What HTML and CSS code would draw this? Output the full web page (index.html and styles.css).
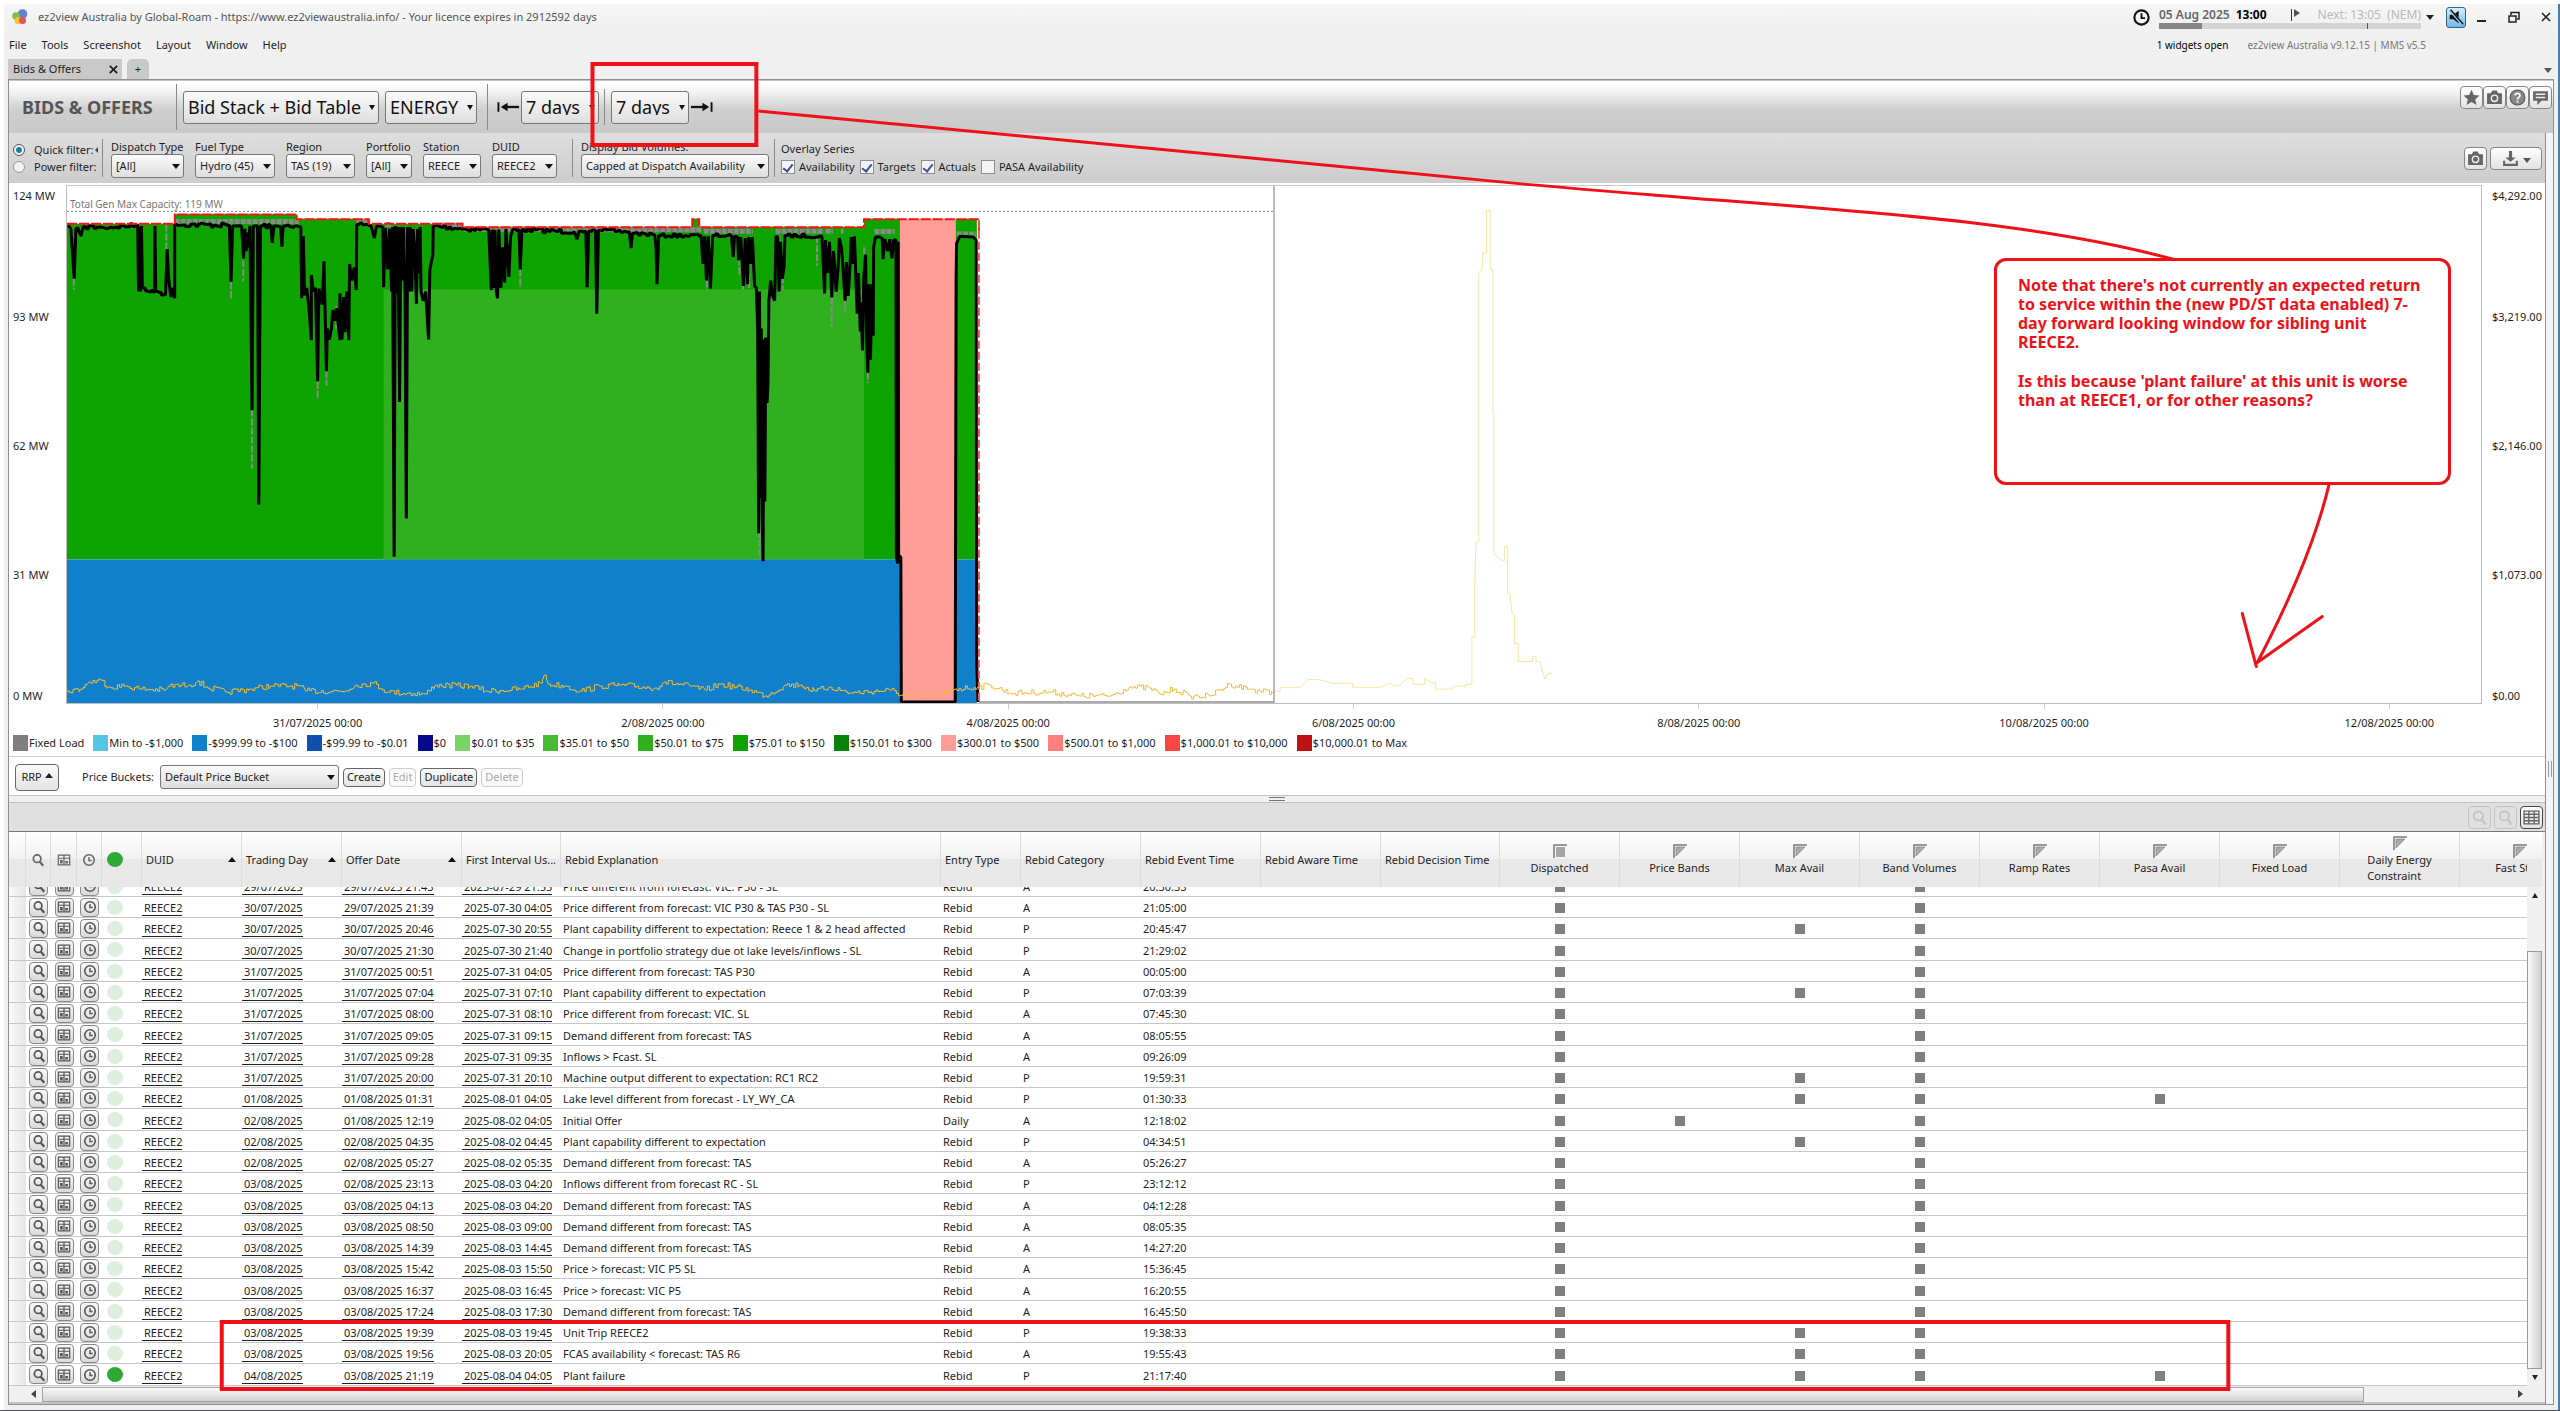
FILE: index.html
```html
<!DOCTYPE html>
<html lang="en">
<head>
  <meta charset="UTF-8">
  <meta name="viewport" content="width=device-width, initial-scale=1.0">
  <title>ez2view Australia</title>
  <link rel="stylesheet" href="styles.css">
</head>
<body>
  <!-- Shared icons -->
  <svg class="sprite" aria-hidden="true">
    <symbol id="i-search" viewBox="0 0 16 16"><circle cx="7" cy="6.500" r="4.300" fill="none" stroke="currentColor" stroke-width="2"/><path d="M10 10l4 4.500" stroke="currentColor" stroke-width="2.400"/></symbol>
    <symbol id="i-book" viewBox="0 0 16 16"><path d="M1.500 2.500h13v11h-13zM8 2.500v11M1.500 6h13" fill="none" stroke="currentColor" stroke-width="1.400"/><path d="M3.500 8h3v4h-3zM9.500 9h3v3h-3z" fill="currentColor"/></symbol>
    <symbol id="i-clock" viewBox="0 0 16 16"><circle cx="8" cy="8" r="6" fill="none" stroke="currentColor" stroke-width="1.800"/><path d="M8 4.500V8.500h3" fill="none" stroke="currentColor" stroke-width="1.600"/></symbol>
    <symbol id="i-star" viewBox="0 0 16 16"><path d="M8 .8l2.200 4.900 5.300.5-4 3.600 1.200 5.300L8 12.300l-4.700 2.800 1.200-5.300-4-3.600 5.300-.5z" fill="currentColor"/></symbol>
    <symbol id="i-camera" viewBox="0 0 16 16"><path d="M1 4h3.500L6 1.500h4L11.500 4H15v10H1z" fill="currentColor"/><circle cx="8" cy="8.800" r="3" fill="none" stroke="#eee" stroke-width="1.300"/></symbol>
    <symbol id="i-help" viewBox="0 0 16 16"><circle cx="8" cy="8" r="7" fill="#888" stroke="#555" stroke-width="1"/><path d="M5.700 6.200C5.800 3.300 10.400 3.400 10.300 6.200 10.200 7.800 8 7.900 8 9.800M8 11v1.700" fill="none" stroke="#fff" stroke-width="1.600"/></symbol>
    <symbol id="i-note" viewBox="0 0 16 16"><path d="M1 2h14v9H9l-4 4v-4H1z" fill="currentColor"/><path d="M3.500 5h9M3.500 8h9" stroke="#eee" stroke-width="1.400"/></symbol>
    <symbol id="i-save" viewBox="0 0 16 16"><path d="M6.500 1h3v6H13L8 11 3 7h3.500z" fill="currentColor"/><path d="M2 10v4h12v-4" fill="none" stroke="currentColor" stroke-width="2"/></symbol>
    <symbol id="i-grid" viewBox="0 0 16 16"><path d="M1 2h14v12H1zM1 5h14M1 8h14M1 11h14M5.500 2v12M10.500 2v12" fill="none" stroke="currentColor" stroke-width="1.300"/></symbol>
    <symbol id="i-bevel" viewBox="0 0 14 14"><path d="M1 14V1h13" fill="none" stroke="#777" stroke-width="1.500"/><path d="M3 12V3h9z" fill="#aaa" stroke="#777" stroke-width=".6"/></symbol>
    <symbol id="i-bevelbox" viewBox="0 0 14 14"><path d="M1 14V1h13" fill="none" stroke="#777" stroke-width="1.500"/><path d="M3 3h9v10H3z" fill="#a5a5a5"/></symbol>
  </svg>

  <div class="window">
    <header class="titlebar">
      <svg class="logo" viewBox="0 0 16 16"><circle cx="10.500" cy="5" r="4.800" fill="#5f86c8"/><circle cx="4" cy="7" r="3.800" fill="#7fbf3f"/><circle cx="6" cy="11.500" r="3.500" fill="#f3c433"/><circle cx="10.500" cy="11.500" r="3.500" fill="#e5574c"/></svg>
      <span class="app-name">ez2view Australia by Global-Roam - https://www.ez2viewaustralia.info/ - Your licence expires in 2912592 days</span>
      <svg class="clock"><use href="#i-clock"/></svg>
      <div class="market-time">
        <div class="times"><b>05 Aug 2025</b><strong>13:00</strong><i class="flag"></i><em>Next: 13:05&nbsp; (NEM)</em></div>
        <div class="progress"><i class="done"></i><i class="tick"></i></div>
      </div>
      <i class="caret"></i>
      <button class="mute" aria-label="Mute"><svg viewBox="0 0 20 20"><path d="M3 7.500h4L13 3v14l-6-4.500H3z" fill="#111"/><path d="M3 2l14 16" stroke="#8fd0f5" stroke-width="3"/><path d="M4 2l14 16" stroke="#111" stroke-width="1.500"/></svg></button>
      <button class="win-btn" aria-label="Minimise"><svg viewBox="0 0 12 12"><path d="M1 10h9" stroke="#222" stroke-width="2"/></svg></button>
      <button class="win-btn" aria-label="Restore"><svg viewBox="0 0 12 12"><path d="M1 5h7v6H1zM3 4V1.500h8V8H9" fill="none" stroke="#222" stroke-width="1.500"/></svg></button>
      <button class="win-btn" aria-label="Close"><svg viewBox="0 0 12 12"><path d="M2 2l8 8M10 2l-8 8" stroke="#222" stroke-width="1.600"/></svg></button>
    </header>

    <nav class="menubar">
      <a href="#">File</a><a href="#">Tools</a><a href="#">Screenshot</a><a href="#">Layout</a><a href="#">Window</a><a href="#">Help</a>
      <span class="widgets">1 widgets open</span>
      <span class="version">ez2view Australia v9.12.15 | MMS v5.5</span>
    </nav>

    <div class="tabs">
      <div class="tab">Bids &amp; Offers <button aria-label="Close tab"><svg viewBox="0 0 12 12"><path d="M2 2l8 8M10 2l-8 8" stroke="#222" stroke-width="2"/></svg></button></div>
      <button class="tab-add">+</button>
      <i class="caret tabs-more"></i>
    </div>

    <main class="workspace">
      <div class="header-bar">
        <h1>BIDS &amp; OFFERS</h1>
        <i class="sep"></i>
        <span class="combo big view"><select aria-label="View"><option>Bid Stack + Bid Table</option></select></span>
        <span class="combo big market"><select aria-label="Market"><option>ENERGY</option></select></span>
        <i class="sep"></i>
        <svg class="arrow" viewBox="0 0 24 12"><path d="M1.500 1v10" stroke="#111" stroke-width="2"/><path d="M6 6h17" stroke="#111" stroke-width="2.400"/><path d="M4 6l7-4.500v9z" fill="#111"/></svg>
        <span class="combo big days"><select aria-label="Days back"><option>7 days</option></select></span>
        <i class="sep near"></i>
        <span class="combo big days"><select aria-label="Days forward"><option>7 days</option></select></span>
        <svg class="arrow" viewBox="0 0 24 12"><path d="M22.500 1v10" stroke="#111" stroke-width="2"/><path d="M1 6h17" stroke="#111" stroke-width="2.400"/><path d="M20 6l-7-4.500v9z" fill="#111"/></svg>
        <div class="header-tools">
          <button class="icon-btn" aria-label="Favourite"><svg><use href="#i-star"/></svg></button>
          <button class="icon-btn" aria-label="Screenshot"><svg><use href="#i-camera"/></svg></button>
          <button class="icon-btn" aria-label="Help"><svg><use href="#i-help"/></svg></button>
          <button class="icon-btn" aria-label="Notes"><svg><use href="#i-note"/></svg></button>
        </div>
      </div>

      <div class="body-row">
        <div class="content">
          <div class="filters">
            <div class="filter-mode">
              <label><input type="radio" name="mode" checked>Quick filter:<i class="caret left"></i></label>
              <label><input type="radio" name="mode">Power filter:</label>
            </div>
            <i class="sep"></i>
            <label class="field w73">Dispatch Type<span class="combo"><select><option>[All]</option></select></span></label>
            <label class="field w80">Fuel Type<span class="combo"><select><option>Hydro (45)</option></select></span></label>
            <label class="field w69">Region<span class="combo"><select><option>TAS (19)</option></select></span></label>
            <label class="field w46">Portfolio<span class="combo"><select><option>[All]</option></select></span></label>
            <label class="field w58">Station<span class="combo"><select><option>REECE</option></select></span></label>
            <label class="field w64">DUID<span class="combo"><select><option>REECE2</option></select></span></label>
            <i class="sep"></i>
            <label class="field w188">Display Bid Volumes:<span class="combo"><select><option>Capped at Dispatch Availability</option></select></span></label>
            <i class="sep"></i>
            <div class="overlay-series">
              <span>Overlay Series</span>
              <div class="checks">
                <label><input type="checkbox" checked>Availability</label>
                <label><input type="checkbox" checked>Targets</label>
                <label><input type="checkbox" checked>Actuals</label>
                <label><input type="checkbox">PASA Availability</label>
              </div>
            </div>
            <div class="filter-tools">
              <button class="icon-btn" aria-label="Snapshot"><svg><use href="#i-camera"/></svg></button>
              <button class="icon-btn wide" aria-label="Export"><svg><use href="#i-save"/></svg><i class="caret"></i></button>
            </div>
          </div>

          <section class="chart">
            <div class="y-axis"><span>124 MW</span><span>93 MW</span><span>62 MW</span><span>31 MW</span><span>0 MW</span></div>
            <div class="plot">
              <span class="cap-label">Total Gen Max Capacity: 119 MW</span>
              <svg viewBox="66 185 2417 519" preserveAspectRatio="none">
                <!-- bid stack bands -->
                <path fill="#0ea400" d="M66 223H174V213H296V218H368V223H462V226H692V218H699V226H864V218H900V560H66zM955 218H977V560H955z"/>
                <path fill="#2eb01f" d="M383 289H864V560H383z"/>
                <path fill="#1080cc" d="M66 560H900V704H66zM955 560H977V704H955z"/>
                <path fill="#ff9d98" d="M900 218H956V704H900z"/>
                <!-- series -->
                <path class="line cap" d="M66 210.500H1274"/>
                <g transform="translate(0 180) scale(.4209 .3699)">
                  <path class="line target" d="M413 110H708M845 110H878M915 118H930M1030 120H1098M1100 131H1425"/>
                  <path class="line stub" d="M173 265V295M393 118V190M547 275V320M576 215V272M597 620V780M753 545V590M774 515V556M797 340V400M1235 240V290"/>
                </g>
                <g transform="translate(600 180) scale(.4464 .3699)">
                  <path class="line target" d="M0 132H228M232 136H342M393 136H500M505 136H522M540 136H545M615 137H660M800 144H843"/>
                  <path class="line stub" d="M239 270V297M312 210V260M320 285V295M334 225V290M357 950V1020M401 150V200M409 235V295M486 150V230M510 170V250M519 315V395M549 325V355M592 180V200M600 520V548"/>
                </g>
                <g transform="translate(0 180) scale(.4209 .3699)"><path id="actual-a" class="line actual"/></g>
                <g transform="translate(600 180) scale(.4464 .3699)"><path id="actual-b" class="line actual"/></g>
                <path class="line after" d="M979 703H1274"/>
                <path class="line avail" d="M66 223H174V213.500H296V218.500H368V223H462V226.500H692V218.500H699V226.500H864V218.500H979V230"/>
                <path class="line avail-end" d="M979 219V703"/>
                <path id="rrp" class="line rrp"/>
                <g transform="translate(1260 180) scale(.4592 .3699)">
                  <path class="line rrp-next" d="M31 1385H45V1374H90L105 1353H130L160 1363H203V1374H265L285 1362 292 1370H305L322 1348 335 1352V1366H360V1350L375 1362H384V1379H422V1371H450V1366H463V1238H469V1100L472 980H478V250L486 235V195H495V80H503V240H509V630H511V1012L528 1030H534V992H541V1120H546L551 1177H556V1255H564V1304H595V1290H603V1304H611L622 1352 628 1336H638"/>
                </g>
                <path class="line now" d="M1274.500 185V704"/>
              </svg>
            </div>
            <div class="y-axis right"><span>$4,292.00</span><span>$3,219.00</span><span>$2,146.00</span><span>$1,073.00</span><span>$0.00</span></div>
            <div class="x-axis"><span>31/07/2025 00:00</span><span>2/08/2025 00:00</span><span>4/08/2025 00:00</span><span>6/08/2025 00:00</span><span>8/08/2025 00:00</span><span>10/08/2025 00:00</span><span>12/08/2025 00:00</span></div>
          </section>

          <ul class="legend" id="legend"></ul>

          <div class="bucket-bar">
            <button class="btn rrp-btn">RRP <i class="caret up"></i></button>
            <label for="bucket">Price Buckets:</label>
            <span class="combo bucket"><select id="bucket"><option>Default Price Bucket</option></select></span>
            <button class="btn">Create</button>
            <button class="btn" disabled>Edit</button>
            <button class="btn">Duplicate</button>
            <button class="btn" disabled>Delete</button>
          </div>

          <div class="splitter"><i></i></div>

          <div class="table-tools">
            <button class="icon-btn" disabled aria-label="Find"><svg><use href="#i-search"/></svg></button>
            <button class="icon-btn" disabled aria-label="Find next"><svg><use href="#i-search"/></svg></button>
            <button class="icon-btn active" aria-label="Grid"><svg><use href="#i-grid"/></svg></button>
          </div>

          <section class="bids">
            <div class="bids-scroll" id="scroller">
              <table>
                <colgroup>
                  <col class="c17"><col class="c25"><col class="c26"><col class="c25"><col class="c40">
                  <col class="c100"><col class="c100"><col class="c120"><col class="c99"><col class="c380"><col class="c80">
                  <col class="c120"><col class="c120"><col class="c120"><col class="c119">
                  <col class="c120"><col class="c120"><col class="c120"><col class="c120"><col class="c120"><col class="c120"><col class="c120"><col class="c120"><col class="c120">
                </colgroup>
                <thead>
                  <tr>
                    <th></th>
                    <th class="ico"><svg><use href="#i-search"/></svg></th>
                    <th class="ico"><svg><use href="#i-book"/></svg></th>
                    <th class="ico"><svg><use href="#i-clock"/></svg></th>
                    <th class="dotcell"><i class="dot on"></i></th>
                    <th class="sorted">DUID</th>
                    <th class="sorted">Trading Day</th>
                    <th class="sorted">Offer Date</th>
                    <th>First Interval Us...</th>
                    <th>Rebid Explanation</th>
                    <th>Entry Type</th>
                    <th>Rebid Category</th>
                    <th>Rebid Event Time</th>
                    <th>Rebid Aware Time</th>
                    <th>Rebid Decision Time</th>
                    <th class="flagcol"><svg><use href="#i-bevelbox"/></svg><span>Dispatched</span></th>
                    <th class="flagcol"><svg><use href="#i-bevel"/></svg><span>Price Bands</span></th>
                    <th class="flagcol"><svg><use href="#i-bevel"/></svg><span>Max Avail</span></th>
                    <th class="flagcol"><svg><use href="#i-bevel"/></svg><span>Band Volumes</span></th>
                    <th class="flagcol"><svg><use href="#i-bevel"/></svg><span>Ramp Rates</span></th>
                    <th class="flagcol"><svg><use href="#i-bevel"/></svg><span>Pasa Avail</span></th>
                    <th class="flagcol"><svg><use href="#i-bevel"/></svg><span>Fixed Load</span></th>
                    <th class="flagcol"><svg><use href="#i-bevel"/></svg><span>Daily Energy<br>Constraint</span></th>
                    <th class="flagcol"><svg><use href="#i-bevel"/></svg><span>Fast Start</span></th>
                  </tr>
                </thead>
                <tbody id="rows"></tbody>
              </table>
            </div>
            <div class="v-scroll">
              <div class="corner"></div>
              <i class="caret up"></i>
              <div class="v-track"><div class="v-thumb"></div></div>
              <i class="caret"></i>
            </div>
          </section>
          <div class="h-scroll">
            <i class="caret left"></i>
            <div class="h-track"><div class="h-thumb"></div></div>
            <i class="caret right"></i>
          </div>
        </div>
        <div class="side-grip"><i></i></div>
      </div>
    </main>
  </div>

  <!-- Mark-up drawn over the window -->
  <svg class="markup" viewBox="0 0 2560 1411">
    <path d="M592 64H756V145H592zM221 1323H2229V1390H221z" stroke-width="4"/>
    <path d="M758 111C950 131 1200 153 1490 181S2000 212 2176 260" stroke-width="3"/>
    <path d="M2330 484Q2312 560 2258 663M2243 614L2257 667M2323 617L2258 663" stroke-width="3" stroke-linecap="round"/>
  </svg>
  <aside class="callout">
    <p>Note that there's not currently an expected return<br>to service within the (new PD/ST data enabled) 7-<br>day forward looking window for sibling unit<br>REECE2.</p>
    <p>Is this because 'plant failure' at this unit is worse<br>than at REECE1, or for other reasons?</p>
  </aside>

  <script src="app.js"></script>
</body>
</html>
```

FILE: styles.css
```css
/* Reset styles */
* {
  margin: 0;
  padding: 0;
  box-sizing: border-box;
}

body {
  font-family: "Noto Sans", "Open Sans", sans-serif;
  font-size: 11px;
  line-height: 16px;
  color: #1e1e1e;
  background: #fff;
  height: 100vh;
  overflow: hidden;
  display: flex;
  position: relative;
  padding: 4px 0 0 4px;
  border-bottom: 1px solid #50525c;
}

button, select, input {
  font: inherit;
  color: inherit;
}

i, em {
  font-style: normal;
}

.sprite {
  position: absolute;
  width: 0;
  height: 0;
}

.window {
  flex: 1;
  min-width: 0;
  display: flex;
  flex-direction: column;
  background: #f0f0f0;
  border-right: 2px solid #4f7fa0;
}

/* Small triangles */
.caret {
  display: inline-block;
  border: 4px solid transparent;
  border-top: 5px solid #222;
  border-bottom: 0;
}

.caret.up {
  border-top: 0;
  border-bottom: 5px solid #222;
}

.caret.left {
  border: 4px solid transparent;
  border-right: 5px solid #444;
  border-left: 0;
}

.caret.right {
  border: 4px solid transparent;
  border-left: 5px solid #444;
  border-right: 0;
}

/* Title bar */
.titlebar {
  height: 26px;
  display: flex;
  align-items: center;
  padding: 0 4px 0 8px;
  background: linear-gradient(#f6f6f6, #f0f0f0);
}

.logo {
  width: 16px;
  height: 16px;
  margin-right: 10px;
}

.app-name {
  flex: 1;
  color: #555;
}

.clock {
  width: 19px;
  height: 19px;
  margin-right: 8px;
  color: #111;
}

.market-time {
  width: 262px;
  margin-right: 5px;
}

.times {
  display: flex;
  line-height: 17px;
  font-size: 12px;
}

.times b {
  color: #666;
  font-weight: 600;
}

.times strong {
  margin-left: 6px;
  color: #000;
}

.times em {
  margin-left: auto;
  color: #b8b8b8;
}

.flag {
  height: 12px;
  margin: 3px 0 0 24px;
  border-left: 1px solid #333;
}

.flag::after {
  content: "";
  display: block;
  margin-left: 2px;
  border: 4px solid transparent;
  border-left: 6px solid #555;
  border-right: 0;
}

.progress {
  height: 6px;
  background: #d3d3d3;
  display: flex;
  align-items: stretch;
}

.done {
  width: 43px;
  background: #858585;
}

.tick {
  width: 166px;
  border-right: 1px solid #555;
}

.mute {
  width: 20px;
  height: 21px;
  margin: 0 6px 0 12px;
  border: 1px solid #35647f;
  border-radius: 3px;
  background: linear-gradient(#d5eefb, #6fb9e6);
}

.mute svg {
  display: block;
}

.win-btn {
  width: 12px;
  height: 20px;
  margin: 0 2px 0 4px;
  border: 0;
  background: none;
}

.win-btn + .win-btn {
  margin-left: 18px;
}

.win-btn svg {
  display: block;
  width: 12px;
  height: 12px;
}

/* Menu */
.menubar {
  height: 29px;
  display: flex;
  align-items: center;
  gap: 15px;
  padding: 0 132px 0 5px;
}

.menubar a {
  color: inherit;
  text-decoration: none;
}

.widgets {
  margin-left: auto;
  font-size: 10px;
  color: #000;
}

.version {
  margin-left: 4px;
  font-size: 10px;
  color: #777;
}

/* Tabs */
.tabs {
  height: 20px;
  display: flex;
  align-items: flex-end;
  padding: 0 4px;
}

.tab {
  width: 114px;
  height: 20px;
  padding: 0 3px 0 5px;
  display: flex;
  justify-content: space-between;
  align-items: center;
  background: #c9c9c9;
}

.tab button, .tab-add {
  border: 0;
  background: none;
}

.tab button svg {
  display: block;
  width: 11px;
  height: 11px;
}

.tab-add {
  width: 22px;
  height: 20px;
  margin-left: 5px;
  border-radius: 5px 5px 0 0;
  background: #c9c9c9;
}

.tabs-more {
  margin: 0 2px 6px auto;
  border-top-color: #555;
}

/* Workspace */
.workspace {
  flex: 1;
  min-height: 0;
  margin: 0 4px 5px 4px;
  border: 1px solid #8f8f8f;
  display: flex;
  flex-direction: column;
}

.header-bar {
  height: 53px;
  display: flex;
  align-items: center;
  padding-left: 13px;
  border-top: 1px solid #c5c5c5;
  background: linear-gradient(#fff 0%, #f4f4f4 20%, #cfcfcf 55%, #c9c9c9 100%);
}

.header-bar h1 {
  width: 154px;
  font-size: 18px;
  font-weight: 700;
  color: #555;
}

.sep {
  width: 1px;
  height: 46px;
  margin-right: 6px;
  background: #8a8a8a;
}

.sep.near {
  margin: 0 6px 0 5px;
  height: 36px;
}

.header-bar .market + .sep {
  margin: 0 8px 0 10px;
}

/* Drop-downs */
.combo {
  position: relative;
  display: inline-block;
}

.combo select {
  width: 100%;
  height: 24px;
  padding: 0 4px;
  appearance: none;
  border: 1px solid #777;
  border-radius: 3px;
  background: linear-gradient(#fbfbfb, #ececec 50%, #dedede);
}

.combo::after {
  content: "";
  position: absolute;
  right: 4px;
  top: 10px;
  border: 4px solid transparent;
  border-top: 5px solid #111;
  border-bottom: 0;
  pointer-events: none;
}

.combo.big select {
  height: 33px;
  padding: 0 4px;
  font-size: 18px;
  color: #111;
}

.combo.big::after {
  top: 14px;
  border-width: 5px 3px 0;
}

.view {
  width: 196px;
  margin-right: 6px;
}

.market {
  width: 92px;
}

.days {
  width: 78px;
}

.arrow {
  width: 23px;
  height: 12px;
  margin: 0 1px;
}

.header-tools {
  margin: 0 1px 20px auto;
  display: flex;
}

.icon-btn {
  width: 23px;
  height: 23px;
  padding: 0;
  display: flex;
  align-items: center;
  justify-content: center;
  border: 1px solid #858585;
  border-radius: 4px;
  color: #666;
  background: linear-gradient(#fff, #e2e2e2);
}

.icon-btn svg {
  flex: none;
  width: 17px;
  height: 17px;
}

.icon-btn.wide {
  width: 52px;
  gap: 4px;
}

.icon-btn.wide .caret {
  margin-top: 5px;
  border-top-color: #555;
}

.icon-btn:disabled {
  color: #c6c6c6;
  border-color: #c3c3c3;
  background: none;
}

.icon-btn.active {
  border-color: #444;
}

.body-row {
  flex: 1;
  min-height: 0;
  display: flex;
}

.content {
  flex: 1;
  min-width: 0;
  display: flex;
  flex-direction: column;
}

.side-grip {
  width: 8px;
  border-left: 1px solid #8f8f8f;
  background: #f4f4f4;
  display: flex;
  align-items: center;
  justify-content: center;
}

.side-grip i {
  width: 4px;
  height: 16px;
  border: solid #999;
  border-width: 0 1px;
}

/* Filters */
.filters {
  height: 50px;
  display: flex;
  align-items: center;
  padding: 0 3px 0 4px;
  background: linear-gradient(#dedede, #cdcdcd);
}

.filters .sep {
  height: 38px;
  margin: 0 8px 0 4px;
}

.filter-mode {
  width: 85px;
  display: flex;
  flex-direction: column;
  gap: 1px;
}

.filter-mode .caret {
  margin-left: auto;
  border-width: 3px 3px 3px 0;
}

.filter-mode label, .checks label {
  display: flex;
  align-items: center;
  white-space: nowrap;
}

input[type="radio"] {
  width: 12px;
  height: 12px;
  margin-right: 9px;
  appearance: none;
  border: 1px solid #999;
  border-radius: 50%;
  background: #f2f2f2;
}

input[type="radio"]:checked {
  border-color: #555;
  background: radial-gradient(#1d7fa8 35%, #f2f2f2 50%);
}

input[type="checkbox"] {
  width: 14px;
  height: 14px;
  margin-right: 4px;
  display: grid;
  place-items: center;
  appearance: none;
  border: 1px solid #8e8f8f;
  background: #f4f4f4;
}

input[type="checkbox"]:checked::after {
  content: "";
  width: 4px;
  height: 8px;
  border: solid #3b4f9c;
  border-width: 0 2px 2px 0;
  rotate: 38deg;
}

.field {
  display: flex;
  flex-direction: column;
  margin-right: 11px;
  line-height: 15px;
  white-space: nowrap;
}

.w73 { width: 73px; }
.w80 { width: 80px; }
.w69 { width: 69px; }
.w46 { width: 46px; }
.w58 { width: 58px; }
.w64 { width: 65px; }
.w188 { width: 188px; margin-right: 1px; }

.filters .w188 + .sep {
  margin-right: 6px;
}

.overlay-series {
  line-height: 18px;
}

.checks {
  display: flex;
  gap: 5px;
}

.filter-tools {
  display: flex;
  gap: 3px;
  margin-left: auto;
}

/* Chart */
.chart {
  flex: 1;
  min-height: 0;
  display: grid;
  grid-template-columns: 57px 1fr 63px;
  grid-template-rows: 1fr 30px;
  padding-top: 2px;
  background: #fff;
  overflow: hidden;
}

.y-axis {
  display: grid;
  grid-template-rows: 1fr 2fr 2fr 2fr 1fr;
  align-items: center;
  padding: 3px 0 0 4px;
}

.y-axis span:first-child {
  align-self: start;
}

.y-axis span:last-child {
  align-self: end;
}

.y-axis.right {
  padding-left: 10px;
}

.plot {
  position: relative;
  min-height: 0;
  border: 1px solid #bdbdbd;
  border-top-color: #c9c9c9;
}

.plot svg {
  display: block;
  width: 100%;
  height: 100%;
}

.cap-label {
  position: absolute;
  left: 3px;
  top: 10px;
  font-size: 10px;
  color: #777;
}

.line {
  fill: none;
  stroke-linejoin: miter;
  vector-effect: non-scaling-stroke;
}

.cap { stroke: #888; stroke-dasharray: 2 2; }
.target { stroke: #8a8a8a; stroke-width: 5px; stroke-dasharray: 5 1; }
.stub { stroke: #8a8a8a; stroke-width: 2px; stroke-dasharray: 7 2; }
.actual { stroke: #000; stroke-width: 3px; stroke-linejoin: bevel; }
.after { stroke: #555; stroke-width: 1px; }
.avail { stroke: #f11; stroke-width: 2px; stroke-dasharray: 10 2; }
.avail-end { stroke: #f0525a; stroke-width: 2px; stroke-dasharray: 8 3; }
.rrp { stroke: #f5bd2f; stroke-width: 1px; }
.rrp-next { stroke: #fde4a4; stroke-width: 1px; }
.now { stroke: #777; }

.x-axis {
  grid-column: 2;
  display: flex;
  margin: 0 -80px 0 79px;
}

.x-axis span {
  flex: 1;
  text-align: center;
  padding-top: 11px;
  background: linear-gradient(#ccc, #ccc) top center / 1px 5px no-repeat;
}

.legend {
  height: 23px;
  display: flex;
  gap: 9px;
  padding: 1px 4px 0;
  list-style: none;
  background: #fff;
  border-bottom: 1px solid #ccc;
  white-space: nowrap;
}

.legend li {
  display: flex;
  gap: 1px;
}

.legend i {
  width: 15px;
  height: 16px;
}

/* Price bucket bar */
.bucket-bar {
  height: 38px;
  display: flex;
  align-items: center;
  padding: 2px 0 0 6px;
  background: #fff;
}

.btn {
  height: 19px;
  margin-left: 4px;
  padding: 0 3px;
  border: 1px solid #666;
  border-radius: 4px;
  background: linear-gradient(#fafafa, #e3e3e3);
}

.btn:disabled {
  color: #aaa;
  border-color: #ccc;
  background: #fafafa;
}

.rrp-btn {
  width: 44px;
  height: 27px;
  margin: 0 23px 0 0;
}

.rrp-btn .caret {
  margin-bottom: 3px;
}

.bucket {
  width: 179px;
  margin-left: 6px;
}

.splitter {
  height: 8px;
  display: flex;
  justify-content: center;
  align-items: center;
  border: solid #c2c2c2;
  border-width: 1px 0;
  background: #f0f0f0;
}

.splitter i {
  width: 16px;
  height: 4px;
  border: solid #777;
  border-width: 1px 0;
}

.table-tools {
  height: 29px;
  display: flex;
  justify-content: flex-end;
  align-items: center;
  gap: 3px;
  padding-right: 2px;
  border-bottom: 1px solid #777;
  background: #e0e0e0;
}

/* Bid table */
.bids {
  height: 554px;
  display: flex;
  background: #fff;
}

.bids-scroll {
  flex: 1;
  min-width: 0;
  overflow: hidden;
}

table {
  width: 2571px;
  table-layout: fixed;
  border-collapse: separate;
  border-spacing: 0;
}

.c17 { width: 17px; }
.c25 { width: 25px; }
.c26 { width: 26px; }
.c40 { width: 40px; }
.c80 { width: 80px; }
.c99 { width: 99px; }
.c100 { width: 100px; }
.c119 { width: 119px; }
.c120 { width: 120px; }
.c380 { width: 380px; }

th {
  position: sticky;
  top: 0;
  z-index: 1;
  height: 55px;
  padding: 0 4px;
  border-right: 1px solid #dcdcdc;
  text-align: left;
  font-weight: 400;
  white-space: nowrap;
  background: linear-gradient(#fff, #f2f2f2 48%, #e8e8e8 50%, #e8e8e8);
}

.ico, .dotcell {
  padding: 0;
  text-align: center;
}

th.ico svg {
  width: 14px;
  height: 14px;
  display: block;
  margin: 0 auto;
  color: #666;
}

.dot {
  display: block;
  width: 16px;
  height: 15px;
  margin: 0 auto 0 5px;
  border-radius: 50%;
  background: #dceedd;
}

.dot.on {
  background: #2fa836;
}

.sorted::after {
  content: "";
  float: right;
  margin: 5px 1px 0 0;
  border: 4px solid transparent;
  border-bottom: 5px solid #111;
  border-top: 0;
}

.flagcol {
  text-align: center;
}

.flagcol svg {
  display: block;
  width: 14px;
  height: 14px;
  margin: 0 auto 2px;
}

.flagcol span {
  display: inline-block;
  text-align: left;
}

td {
  height: 21px;
  padding: 2px 2px 0;
  border-bottom: 1px solid #c6c6c6;
  line-height: 16px;
  white-space: nowrap;
  overflow: hidden;
}

tbody tr:nth-child(4n) td {
  height: 22px;
}

td:first-child {
  background: linear-gradient(90deg, #fafafa, #e6e6e6);
}

td a {
  margin-left: -2px;
  padding-left: 2px;
  color: inherit;
  text-decoration: none;
  border-bottom: 1px solid #222;
}

td.ico, td.dotcell {
  padding: 0;
}

.cell-btn {
  width: 19px;
  height: 19px;
  display: grid;
  place-items: center;
  margin: 0 auto;
  border: 1px solid #888;
  border-radius: 4px;
  color: #555;
  background: linear-gradient(#fafafa, #d9d9d9);
}

.cell-btn svg {
  width: 14px;
  height: 14px;
}

.mark {
  display: block;
  width: 10px;
  height: 10px;
  margin: 0 auto;
  background: #7f7f7f;
}

/* Scroll bars */
.v-scroll {
  width: 18px;
  padding-right: 3px;
  display: flex;
  flex-direction: column;
  align-items: center;
  background: #f0f0f0;
}

.v-scroll .caret {
  border-left-width: 3px;
  border-right-width: 3px;
  margin: 6px 0;
}

.corner {
  width: 100%;
  height: 55px;
  background: linear-gradient(#fff, #f2f2f2 48%, #e8e8e8 50%, #e8e8e8);
}

.v-track {
  width: 100%;
  flex: 1;
  display: flex;
  flex-direction: column;
  justify-content: flex-end;
}

.v-thumb {
  height: 90%;
  border: 1px solid #9a9a9a;
  background: linear-gradient(90deg, #fafafa, #cfcfcf);
}

.h-scroll {
  height: 18px;
  display: flex;
  align-items: center;
  padding: 0 22px;
  border-bottom: 2px solid #c4c4c4;
  background: #f0f0f0;
}

.h-track {
  flex: 1;
  margin: 0 6px;
}

.h-thumb {
  width: 94%;
  height: 15px;
  border: 1px solid #a5a5a5;
  background: linear-gradient(#fafafa, #d2d2d2);
}

/* Mark-up layer */
.markup {
  position: absolute;
  inset: 0;
  width: 100%;
  height: 100%;
  fill: none;
  stroke: #ee1118;
  pointer-events: none;
  z-index: 2;
}

.callout {
  position: absolute;
  left: 1994px;
  top: 258px;
  width: 457px;
  height: 227px;
  padding: 15px 21px;
  border: 3px solid #ee1118;
  border-radius: 12px;
  background: #fff;
  font-size: 16px;
  font-weight: 700;
  line-height: 19px;
  color: #ee1118;
  white-space: nowrap;
  z-index: 3;
}

.callout p + p {
  margin-top: 20px;
}
```

FILE: app.js
```js
const legend = [
  ["#7f7f7f", "Fixed Load"], ["#56c5e3", "Min to -$1,000"], ["#1080cc", "-$999.99 to -$100"],
  ["#0e50b0", "-$99.99 to -$0.01"], ["#08088c", "$0"], ["#7ad366", "$0.01 to $35"],
  ["#44bb33", "$35.01 to $50"], ["#2eb01f", "$50.01 to $75"], ["#0ea400", "$75.01 to $150"],
  ["#078407", "$150.01 to $300"], ["#ff9d98", "$300.01 to $500"], ["#ff807c", "$500.01 to $1,000"],
  ["#ff4444", "$1,000.01 to $10,000"], ["#bd1116", "$10,000.01 to Max"]
];

document.getElementById("legend").innerHTML = legend
  .map(([color, text]) => `<li><i style="background:${color}"></i>${text}</li>`)
  .join("");

// trading day | offer date | first interval | explanation | type | category | event time | flags
// flags: D dispatched, P price bands, M max avail, B band volumes, A pasa avail
const bids = [
  "29/07/2025|29/07/2025 21:43|2025-07-29 21:55|Price different from forecast: VIC. P30 - SL|Rebid|A|20:30:33|DB",
  "30/07/2025|29/07/2025 21:39|2025-07-30 04:05|Price different from forecast: VIC P30 & TAS P30 - SL|Rebid|A|21:05:00|DB",
  "30/07/2025|30/07/2025 20:46|2025-07-30 20:55|Plant capability different to expectation: Reece 1 & 2 head affected|Rebid|P|20:45:47|DMB",
  "30/07/2025|30/07/2025 21:30|2025-07-30 21:40|Change in portfolio strategy due ot lake levels/inflows - SL|Rebid|P|21:29:02|DB",
  "31/07/2025|31/07/2025 00:51|2025-07-31 04:05|Price different from forecast: TAS P30|Rebid|A|00:05:00|DB",
  "31/07/2025|31/07/2025 07:04|2025-07-31 07:10|Plant capability different to expectation|Rebid|P|07:03:39|DMB",
  "31/07/2025|31/07/2025 08:00|2025-07-31 08:10|Price different from forecast: VIC. SL|Rebid|A|07:45:30|DB",
  "31/07/2025|31/07/2025 09:05|2025-07-31 09:15|Demand different from forecast: TAS|Rebid|A|08:05:55|DB",
  "31/07/2025|31/07/2025 09:28|2025-07-31 09:35|Inflows > Fcast. SL|Rebid|A|09:26:09|DB",
  "31/07/2025|31/07/2025 20:00|2025-07-31 20:10|Machine output different to expectation: RC1 RC2|Rebid|P|19:59:31|DMB",
  "01/08/2025|01/08/2025 01:31|2025-08-01 04:05|Lake level different from forecast - LY_WY_CA|Rebid|P|01:30:33|DMBA",
  "02/08/2025|01/08/2025 12:19|2025-08-02 04:05|Initial Offer|Daily|A|12:18:02|DPB",
  "02/08/2025|02/08/2025 04:35|2025-08-02 04:45|Plant capability different to expectation|Rebid|P|04:34:51|DMB",
  "02/08/2025|02/08/2025 05:27|2025-08-02 05:35|Demand different from forecast: TAS|Rebid|A|05:26:27|DB",
  "03/08/2025|02/08/2025 23:13|2025-08-03 04:20|Inflows different from forecast RC - SL|Rebid|P|23:12:12|DB",
  "03/08/2025|03/08/2025 04:13|2025-08-03 04:20|Demand different from forecast: TAS|Rebid|A|04:12:28|DB",
  "03/08/2025|03/08/2025 08:50|2025-08-03 09:00|Demand different from forecast: TAS|Rebid|A|08:05:35|DB",
  "03/08/2025|03/08/2025 14:39|2025-08-03 14:45|Demand different from forecast: TAS|Rebid|A|14:27:20|DB",
  "03/08/2025|03/08/2025 15:42|2025-08-03 15:50|Price > forecast: VIC P5 SL|Rebid|A|15:36:45|DB",
  "03/08/2025|03/08/2025 16:37|2025-08-03 16:45|Price > forecast: VIC P5|Rebid|A|16:20:55|DB",
  "03/08/2025|03/08/2025 17:24|2025-08-03 17:30|Demand different from forecast: TAS|Rebid|A|16:45:50|DB",
  "03/08/2025|03/08/2025 19:39|2025-08-03 19:45|Unit Trip REECE2|Rebid|P|19:38:33|DMB",
  "03/08/2025|03/08/2025 19:56|2025-08-03 20:05|FCAS availability < forecast: TAS R6|Rebid|A|19:55:43|DMB",
  "04/08/2025|03/08/2025 21:19|2025-08-04 04:05|Plant failure|Rebid|P|21:17:40|DMBA"
];

const iconCell = (name, label) =>
  `<td class="ico"><button class="cell-btn" aria-label="${label}"><svg><use href="#i-${name}"/></svg></button></td>`;
const link = (text) => `<td><a href="#">${text}</a></td>`;
const escapeText = (text) => text.replace(/&/g, "&amp;").replace(/</g, "&lt;");

document.getElementById("rows").innerHTML = bids.map((line, index) => {
  const [day, offer, first, why, type, category, time, flags] = line.split("|");
  const last = index === bids.length - 1;
  const marks = ["D", "P", "M", "B", "R", "A", "F", "E", "S"]
    .map((flag) => `<td>${flags.includes(flag) ? '<i class="mark"></i>' : ""}</td>`)
    .join("");
  return `<tr><td></td>${iconCell("search", "Details")}${iconCell("book", "Compare")}${iconCell("clock", "History")}
    <td class="dotcell"><i class="dot${last ? " on" : ""}"></i></td>
    ${link("REECE2")}${link(day)}${link(offer)}${link(first)}
    <td>${escapeText(why)}</td><td>${type}</td><td>${category}</td><td>${time}</td><td></td><td></td>${marks}</tr>`;
}).join("");

const scroller = document.getElementById("scroller");
scroller.scrollTop = scroller.scrollHeight;

// Small repeatable random so the lines look the same on every load
let seed = 7;
const random = () => {
  seed = (seed * 16807) % 2147483647;
  return seed / 2147483647 - 0.5;
};

// Adds jitter along the flatter parts of a line
const roughLine = (points, step, amount) => {
  let path = `M${points[0][0]} ${points[0][1]}`;
  for (let i = 1; i < points.length; i++) {
    const [x0, y0] = points[i - 1];
    const [x1, y1] = points[i];
    const count = Math.floor((x1 - x0) / step);
    for (let n = 1; n < count; n++) {
      const x = x0 + (x1 - x0) * n / count;
      const y = y0 + (y1 - y0) * n / count + random() * amount;
      path += `H${x.toFixed(1)}V${y.toFixed(1)}`;
    }
    path += `L${x1} ${y1}`;
  }
  return path;
};

const actualA = [
  [160, 120], [166, 130], [174, 265], [178, 128], [190, 150], [195, 124], [240, 126], [325, 120], [327, 300], [330, 125],
  [332, 300], [334, 122], [336, 290], [365, 303], [366, 122], [368, 300], [388, 308], [391, 310], [395, 185], [399, 270],
  [404, 315], [409, 290], [413, 318], [413, 118], [543, 120], [547, 273], [551, 122], [572, 122], [577, 210], [580, 130],
  [583, 190], [586, 140], [588, 180], [592, 122], [597, 622], [600, 122], [610, 122], [613, 878], [617, 122], [642, 122],
  [645, 168], [649, 122], [665, 125], [668, 178], [671, 122], [700, 122], [713, 125], [715, 318], [719, 150], [722, 310],
  [727, 290], [732, 340], [738, 432], [738, 255], [743, 300], [748, 290], [753, 543], [756, 292], [764, 335], [768, 218],
  [774, 516], [776, 400], [781, 430], [786, 400], [789, 350], [794, 380], [798, 345], [806, 432], [806, 305], [811, 430],
  [815, 315], [818, 410], [822, 300], [827, 432], [829, 225], [834, 270], [840, 235], [845, 296], [846, 118], [880, 122],
  [888, 155], [893, 122], [908, 125], [910, 288], [914, 128], [920, 240], [924, 130], [929, 300], [931, 125], [935, 1020],
  [938, 122], [942, 305], [944, 125], [948, 600], [951, 125], [954, 270], [957, 125], [961, 300], [964, 916], [967, 125],
  [970, 300], [973, 125], [977, 300], [980, 130], [984, 180], [988, 333], [991, 130], [995, 250], [997, 125], [999, 300],
  [1004, 325], [1010, 300], [1017, 430], [1020, 240], [1027, 200], [1028, 122], [1100, 130], [1160, 132], [1166, 296],
  [1168, 132], [1172, 290], [1175, 132], [1178, 300], [1181, 318], [1184, 132], [1189, 290], [1193, 180], [1198, 275],
  [1201, 130], [1208, 260], [1212, 150], [1218, 130], [1232, 132], [1235, 240], [1239, 132], [1364, 138], [1370, 158],
  [1375, 136], [1391, 136], [1394, 288], [1398, 136], [1414, 134], [1417, 360], [1421, 134], [1425, 134]
];

const actualB = [
  [0, 134], [65, 138], [69, 182], [72, 142], [122, 146], [125, 180], [127, 280], [131, 148], [226, 148], [230, 225],
  [234, 150], [238, 270], [242, 150], [247, 292], [252, 148], [294, 148], [298, 206], [301, 150], [308, 152], [310, 215],
  [315, 152], [321, 285], [325, 155], [330, 280], [333, 152], [337, 225], [341, 152], [346, 285], [350, 290], [353, 410],
  [355, 956], [357, 300], [359, 860], [361, 400], [363, 900], [365, 1032], [367, 430], [369, 870], [371, 425], [374, 602],
  [376, 550], [378, 325], [382, 270], [386, 310], [391, 325], [394, 150], [398, 152], [401, 300], [404, 165], [408, 265],
  [412, 235], [414, 148], [497, 150], [503, 305], [505, 160], [509, 250], [514, 165], [519, 316], [523, 190], [529, 300],
  [533, 240], [536, 155], [541, 182], [545, 250], [549, 325], [552, 220], [556, 312], [560, 230], [563, 152], [567, 225],
  [570, 150], [576, 360], [579, 250], [583, 408], [585, 330], [588, 460], [591, 260], [595, 200], [597, 420], [600, 520],
  [602, 280], [606, 485], [609, 280], [612, 420], [613, 180], [617, 152], [632, 155], [634, 212], [638, 158], [645, 190],
  [649, 158], [654, 210], [658, 160], [663, 160], [664, 1020], [667, 1038], [668, 165], [669, 1015], [674, 1022],
  [675, 1414], [796, 1414], [798, 262], [799, 170], [806, 150], [836, 152], [843, 160], [844, 1300], [847, 1414]
];

const price = [
  [66, 692], [80, 690], [88, 683], [100, 681], [108, 688], [125, 687], [140, 690], [165, 691], [168, 687], [188, 686],
  [197, 682], [205, 688], [225, 693], [250, 690], [270, 687], [300, 687], [305, 692], [345, 692], [355, 686], [372, 684],
  [388, 693], [425, 695], [435, 686], [470, 687], [485, 692], [520, 690], [540, 684], [544, 676], [548, 685], [565, 687],
  [580, 692], [600, 687], [620, 686], [655, 689], [664, 683], [690, 687], [705, 691], [720, 685], [750, 691], [765, 697],
  [785, 686], [800, 686], [815, 692], [830, 688], [850, 694], [890, 691], [905, 697], [940, 696], [955, 690], [978, 688],
  [990, 686], [1010, 694], [1050, 693], [1080, 697], [1110, 697], [1130, 688], [1150, 689], [1160, 695], [1175, 690],
  [1190, 697], [1210, 697], [1230, 685], [1250, 690], [1274, 694]
];

document.getElementById("actual-a").setAttribute("d", roughLine(actualA, 6, 12));
document.getElementById("actual-b").setAttribute("d", roughLine(actualB.slice(0, -11), 6, 9) +
  "L" + actualB.slice(-11).join("L"));
document.getElementById("rrp").setAttribute("d", roughLine(price, 2, 6));
```
